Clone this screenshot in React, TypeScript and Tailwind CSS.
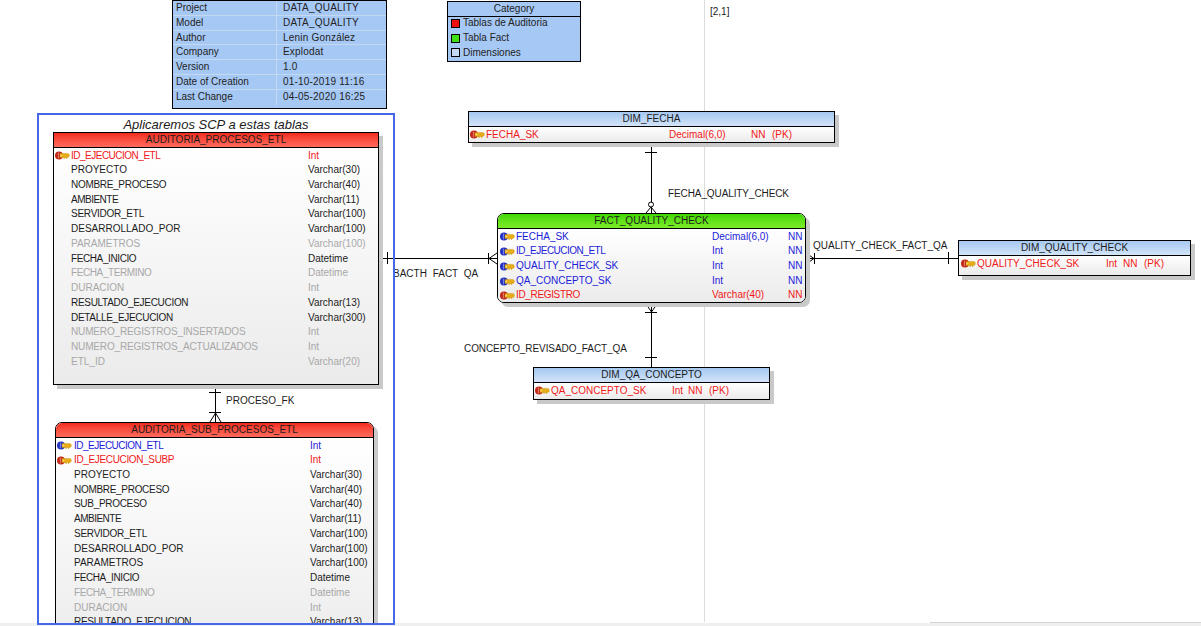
import React from "react";

type Tone = "black" | "gray" | "red" | "blue";
const toneClass: Record<Tone, string> = {
  black: "text-[#1c1c1c]",
  gray: "text-[#a8a8a8]",
  red: "text-[#f01818]",
  blue: "text-[#1c1cd8]",
};

const tracking: Record<string, string> = {
  ID_EJECUCION_ETL: "tracking-[-0.5px]",
  ID_EJECUCION_SUBP: "tracking-[-0.35px]",
  ID_REGISTRO: "tracking-[-0.35px]",
  NOMBRE_PROCESO: "tracking-[-0.3px]",
  RESULTADO_EJECUCION: "tracking-[-0.3px]",
  SERVIDOR_ETL: "tracking-[-0.25px]",
  AMBIENTE: "tracking-[-0.5px]",
  NUMERO_REGISTROS_INSERTADOS: "tracking-[-0.15px]",
  NUMERO_REGISTROS_ACTUALIZADOS: "tracking-[-0.15px]",
  FECHA_INICIO: "tracking-[-0.4px]",
  DETALLE_EJECUCION: "tracking-[-0.3px]",
  FECHA_TERMINO: "tracking-[-0.4px]",
  SUB_PROCESO: "tracking-[-0.3px]",
};

function Key({ tone }: { tone: "red" | "blue" }) {
  const c = tone === "red" ? "#c02818" : "#2430c0";
  const hi = tone === "red" ? "#e88070" : "#7f8cf0";
  return (
    <svg width="15" height="9" viewBox="0 0 15 9" className="shrink-0">
      <circle cx="4" cy="4.5" r="4" fill={c} />
      <path d="M3.4 1.6 V7.4" stroke={hi} strokeWidth="1" />
      <path d="M5 2.4 H12.6 Q14.4 2.4 14.4 4.4 Q14.4 6.4 12.6 6.4 H12 V7.4 H11 V6.4 H9.6 V7.4 H8.6 V6.4 H5 Z" fill="#e8ac18" stroke="#c89010" strokeWidth="0.4" />
      <circle cx="6.4" cy="4.4" r="1" fill="#f8d868" />
    </svg>
  );
}

type RowProps = {
  tone?: Tone;
  keyTone?: "red" | "blue";
  cells: string[];
  widths: string[];
  iconBox: string;
};

function Row({ tone = "black", keyTone, cells, widths, iconBox }: RowProps) {
  return (
    <div className={`flex h-[14.72px] items-center whitespace-nowrap leading-[14.72px] ${toneClass[tone]}`}>
      <div className={`flex shrink-0 items-center ${iconBox}`}>{keyTone && <Key tone={keyTone} />}</div>
      {cells.map((c, i) => (
        <span key={i} className={`shrink-0 ${widths[i]} ${tracking[c] ?? ""}`}>
          {c}
        </span>
      ))}
    </div>
  );
}

function Entity({
  className,
  headClass,
  title,
  bodyClass = "",
  children,
}: {
  className: string;
  headClass: string;
  title: string;
  bodyClass?: string;
  children: React.ReactNode;
}) {
  return (
    <div className={`absolute flex flex-col border border-black shadow-[4px_4px_0_#c9c9c9] ${className}`}>
      <div className={`h-[15px] shrink-0 border-b border-black text-center leading-[14px] text-[#1c1c1c] ${headClass}`}>{title}</div>
      <div className={`min-h-0 flex-1 bg-gradient-to-b from-white to-[#ebebeb] pt-[0.6px] ${bodyClass}`}>{children}</div>
    </div>
  );
}

const red = "bg-gradient-to-b from-[#f22a1c] to-[#ff6a5c]";
const blue = "bg-gradient-to-b from-[#a6c8f0] to-[#d2e4f8]";
const green = "bg-gradient-to-b from-[#3fd800] to-[#7cec28]";

const t1: [string, string, Tone, ("red" | "blue")?][] = [
  ["ID_EJECUCION_ETL", "Int", "red", "red"],
  ["PROYECTO", "Varchar(30)", "black"],
  ["NOMBRE_PROCESO", "Varchar(40)", "black"],
  ["AMBIENTE", "Varchar(11)", "black"],
  ["SERVIDOR_ETL", "Varchar(100)", "black"],
  ["DESARROLLADO_POR", "Varchar(100)", "black"],
  ["PARAMETROS", "Varchar(100)", "gray"],
  ["FECHA_INICIO", "Datetime", "black"],
  ["FECHA_TERMINO", "Datetime", "gray"],
  ["DURACION", "Int", "gray"],
  ["RESULTADO_EJECUCION", "Varchar(13)", "black"],
  ["DETALLE_EJECUCION", "Varchar(300)", "black"],
  ["NUMERO_REGISTROS_INSERTADOS", "Int", "gray"],
  ["NUMERO_REGISTROS_ACTUALIZADOS", "Int", "gray"],
  ["ETL_ID", "Varchar(20)", "gray"],
];

const t2: [string, string, Tone, ("red" | "blue")?][] = [
  ["ID_EJECUCION_ETL", "Int", "blue", "blue"],
  ["ID_EJECUCION_SUBP", "Int", "red", "red"],
  ["PROYECTO", "Varchar(30)", "black"],
  ["NOMBRE_PROCESO", "Varchar(40)", "black"],
  ["SUB_PROCESO", "Varchar(40)", "black"],
  ["AMBIENTE", "Varchar(11)", "black"],
  ["SERVIDOR_ETL", "Varchar(100)", "black"],
  ["DESARROLLADO_POR", "Varchar(100)", "black"],
  ["PARAMETROS", "Varchar(100)", "black"],
  ["FECHA_INICIO", "Datetime", "black"],
  ["FECHA_TERMINO", "Datetime", "gray"],
  ["DURACION", "Int", "gray"],
  ["RESULTADO_EJECUCION", "Varchar(13)", "black"],
];

const fact: [string, string, Tone, "red" | "blue"][] = [
  ["FECHA_SK", "Decimal(6,0)", "blue", "blue"],
  ["ID_EJECUCION_ETL", "Int", "blue", "blue"],
  ["QUALITY_CHECK_SK", "Int", "blue", "blue"],
  ["QA_CONCEPTO_SK", "Int", "blue", "blue"],
  ["ID_REGISTRO", "Varchar(40)", "red", "red"],
];

const info = [
  ["Project", "DATA_QUALITY"],
  ["Model", "DATA_QUALITY"],
  ["Author", "Lenin González"],
  ["Company", "Explodat"],
  ["Version", "1.0"],
  ["Date of Creation", "01-10-2019 11:16"],
  ["Last Change", "04-05-2020 16:25"],
];

const cats = [
  ["Tablas de Auditoria", "bg-[#f01010]"],
  ["Tabla Fact", "bg-[#40e010]"],
  ["Dimensiones", "bg-[#c4d8f4]"],
];

function Label({ className, children }: { className: string; children: React.ReactNode }) {
  return <span className={`absolute whitespace-nowrap leading-[12px] text-[#1c1c1c] ${className}`}>{children}</span>;
}

export default function App() {
  return (
    <div className="relative h-[626px] w-[1201px] overflow-hidden bg-white font-['Liberation_Sans',Arial,sans-serif] text-[10px]">
      {/* page break guides */}
      <div className="absolute left-[704px] top-0 h-[622px] w-px bg-[#dcdcdc]" />
      <div className="absolute bottom-0 left-0 h-[3px] w-full bg-[#efefef]" />
      <div className="absolute bottom-[3px] left-[930px] h-px w-[271px] bg-[#d4d4d4]" />
      <Label className="left-[710px] top-[6px]">[2,1]</Label>

      {/* project info */}
      <div className="absolute left-[172px] top-0 flex h-[109px] w-[215px] flex-col border border-black bg-[#a6c8f5] text-[#222]">
        {info.map(([a, b]) => (
          <div key={a} className="flex h-[14.8px] items-center border-b border-[#c4d8f0] leading-[14px] last:border-b-0">
            <span className="h-full w-[104px] shrink-0 border-r border-[#c4d8f0] pl-[3px]">{a}</span>
            <span className="pl-[6px] tracking-[0.2px]">{b}</span>
          </div>
        ))}
      </div>

      {/* category legend */}
      <div className="absolute left-[447px] top-[1px] flex h-[61px] w-[134px] flex-col border border-black bg-[#a6c8f5] text-[#222]">
        <div className="h-[15px] shrink-0 border-b border-black text-center leading-[14px]">Category</div>
        <div className="-mt-[1px] flex flex-col">
          {cats.map(([t, c]) => (
            <div key={t} className="flex h-[14.8px] items-center gap-[3px] pl-[3px]">
              <span className={`h-[9px] w-[9px] shrink-0 border border-black ${c}`} />
              <span className="leading-[14px]">{t}</span>
            </div>
          ))}
        </div>
      </div>

      {/* connectors */}
      <svg className="absolute left-0 top-0" width="1201" height="626" viewBox="0 0 1201 626" fill="none" stroke="#000" strokeWidth="1" shapeRendering="crispEdges">
        <path d="M651.5 146V213M645 152.5H657" />
        <g shapeRendering="auto">
          <circle cx="651" cy="204.5" r="2.5" fill="#fff" />
          <path d="M651 207L646 213M651 207L656 213" />
        </g>
        <path d="M380 258.5H497M387.5 252V264M488.5 253V264" />
        <g shapeRendering="auto"><path d="M489 258.5L497 253M489 258.5L497 264" /></g>
        <path d="M806 258.5H958M948.5 252V264M814.5 253V264" />
        <g shapeRendering="auto"><path d="M814 258.5L806 253M814 258.5L806 264" /></g>
        <path d="M651.5 303V367M645 357.5H657M645 312.5H657" />
        <g shapeRendering="auto"><path d="M651.5 312L646 304M651.5 312L657 304" /></g>
        <path d="M215.5 386V422M209 392.5H221M209 412.5H221" />
        <g shapeRendering="auto"><path d="M215.5 413L210 422M215.5 413L221 422" /></g>
      </svg>

      <Label className="left-[668px] top-[188px] tracking-[-0.1px]">FECHA_QUALITY_CHECK</Label>
      <Label className="left-[393px] top-[268px] [word-spacing:3px]">BACTH FACT QA</Label>
      <Label className="left-[226px] top-[395px]">PROCESO_FK</Label>
      <Label className="left-[464px] top-[343px] tracking-[-0.08px]">CONCEPTO_REVISADO_FACT_QA</Label>
      <Label className="left-[813px] top-[240px]">QUALITY_CHECK_FACT_QA</Label>

      {/* subject area */}
      <div className="absolute left-[37px] top-[113px] h-[512px] w-[358px] overflow-hidden border-2 border-[#4468e8]">
        <div className="absolute left-0 right-0 top-[3px] text-center text-[13px] italic leading-[14px] text-[#1c1c1c]">Aplicaremos SCP a estas tablas</div>
        <Entity className="left-[14px] top-[17px] h-[253px] w-[326px]" headClass={red} title="AUDITORIA_PROCESOS_ETL">
          {t1.map(([n, ty, tone, k]) => (
            <Row key={n} tone={tone} keyTone={k} cells={[n, ty]} widths={["w-[237px]", "w-[60px]"]} iconBox="w-[17px] pl-[1px]" />
          ))}
        </Entity>
        <Entity className="left-[16px] top-[307px] h-[240px] w-[319px] rounded-t-[7px]" headClass={`${red} rounded-t-[6px]`} title="AUDITORIA_SUB_PROCESOS_ETL">
          {t2.map(([n, ty, tone, k]) => (
            <Row key={n} tone={tone} keyTone={k} cells={[n, ty]} widths={["w-[236px]", "w-[60px]"]} iconBox="w-[18px] pl-[1px]" />
          ))}
        </Entity>
      </div>

      {/* star schema */}
      <Entity className="left-[468px] top-[111px] h-[32px] w-[367px]" headClass={blue} title="DIM_FECHA">
        <Row tone="red" keyTone="red" cells={["FECHA_SK", "Decimal(6,0)", "NN", "(PK)"]} widths={["w-[183px]", "w-[82px]", "w-[21px]", "w-[30px]"]} iconBox="w-[17px] pl-[1px]" />
      </Entity>

      <Entity className="left-[497px] top-[213px] h-[90px] w-[309px] rounded-[7px]" headClass={`${green} rounded-t-[6px]`} bodyClass="rounded-b-[6px]" title="FACT_QUALITY_CHECK">
        {fact.map(([n, ty, tone, k]) => (
          <Row key={n} tone={tone} keyTone={k} cells={[n, ty, "NN"]} widths={["w-[196px]", "w-[76px]", "w-[16px]"]} iconBox="w-[18px] pl-[2px]" />
        ))}
      </Entity>

      <Entity className="left-[533px] top-[367px] h-[33px] w-[237px]" headClass={blue} title="DIM_QA_CONCEPTO">
        <Row tone="red" keyTone="red" cells={["QA_CONCEPTO_SK", "Int", "NN", "(PK)"]} widths={["w-[121px]", "w-[16px]", "w-[21px]", "w-[30px]"]} iconBox="w-[17px] pl-[1px]" />
      </Entity>

      <Entity className="left-[958px] top-[240px] h-[36px] w-[233px]" headClass={blue} title="DIM_QUALITY_CHECK">
        <Row tone="red" keyTone="red" cells={["QUALITY_CHECK_SK", "Int", "NN", "(PK)"]} widths={["w-[129px]", "w-[17px]", "w-[21px]", "w-[30px]"]} iconBox="w-[18px] pl-[2px]" />
      </Entity>
    </div>
  );
}
